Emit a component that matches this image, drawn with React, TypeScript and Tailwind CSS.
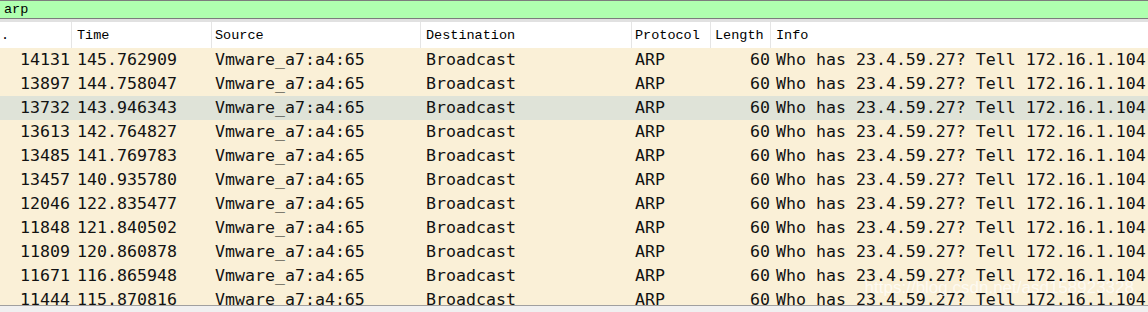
import React from 'react';

type Packet = {
  no: number;
  time: string;
  selected?: boolean;
};

const packets: Packet[] = [
  { no: 14131, time: '145.762909' },
  { no: 13897, time: '144.758047' },
  { no: 13732, time: '143.946343', selected: true },
  { no: 13613, time: '142.764827' },
  { no: 13485, time: '141.769783' },
  { no: 13457, time: '140.935780' },
  { no: 12046, time: '122.835477' },
  { no: 11848, time: '121.840502' },
  { no: 11809, time: '120.860878' },
  { no: 11671, time: '116.865948' },
  { no: 11444, time: '115.870816' },
];

const cols = 'grid grid-cols-[72px_140px_209px_211px_79px_60px_1fr]';
const headFont = { fontFamily: '"Liberation Mono", "DejaVu Sans Mono", monospace' };
const rowFont = { fontFamily: '"DejaVu Sans Mono", "Liberation Mono", monospace' };

const App: React.FC = () => {
  return (
    <div className="relative w-[1148px] h-[312px] overflow-hidden bg-white flex flex-col">
      {/* Display filter */}
      <div
        className="h-[19px] shrink-0 border-t border-b border-[#7c7c7c] bg-[#afffaf] pl-[4px] text-[13.5px] leading-[18px] text-black"
        style={headFont}
      >
        arp
      </div>
      <div className="h-[3px] shrink-0 bg-[#e1e1e1]" />

      {/* Column header */}
      <div
        className={`${cols} h-[26px] shrink-0 bg-white text-[13.5px] text-black`}
        style={headFont}
      >
        <div className="border-r border-[#e5e5e5] flex items-center pt-[2px] pl-[1px]">.</div>
        <div className="border-r border-[#e5e5e5] flex items-center pt-[2px] pl-[5px]">Time</div>
        <div className="border-r border-[#e5e5e5] flex items-center pt-[2px] pl-[3px]">Source</div>
        <div className="border-r border-[#e5e5e5] flex items-center pt-[2px] pl-[5px]">Destination</div>
        <div className="border-r border-[#e5e5e5] flex items-center pt-[2px] pl-[3px]">Protocol</div>
        <div className="border-r border-[#e5e5e5] flex items-center pt-[2px] pl-[4px]">Length</div>
        <div className="flex items-center pt-[2px] pl-[5px]">Info</div>
      </div>

      {/* Packet list */}
      <div className="h-[257px] shrink-0 overflow-hidden" style={rowFont}>
        {packets.map((p) => (
          <div
            key={p.no}
            className={`${cols} h-[24px] items-center whitespace-nowrap text-[16.6px] text-[#121212] ${
              p.selected ? 'bg-[#dfe3d8]' : 'bg-[#faf0d7]'
            }`}
          >
            <div className="text-right pr-[2px]">{p.no}</div>
            <div className="pl-[5px]">{p.time}</div>
            <div className="pl-[3px]">Vmware_a7:a4:65</div>
            <div className="pl-[5px]">Broadcast</div>
            <div className="pl-[3px]">ARP</div>
            <div className="text-right pr-[1px]">60</div>
            <div className="pl-[5px] overflow-hidden">Who has 23.4.59.27? Tell 172.16.1.104</div>
          </div>
        ))}
      </div>

      {/* Horizontal scrollbar edge */}
      <div className="flex-1 border-t border-[#a0a0a0] bg-[#f0f0f0]" />

      {/* Watermark */}
      <div
        className="absolute right-[14px] bottom-[12px] text-[17px] text-white/70 pointer-events-none"
        style={{ fontFamily: '"Liberation Sans", Arial, sans-serif' }}
      >
        https://blog.csdn.net/asd158923328
      </div>
    </div>
  );
};

export default App;
